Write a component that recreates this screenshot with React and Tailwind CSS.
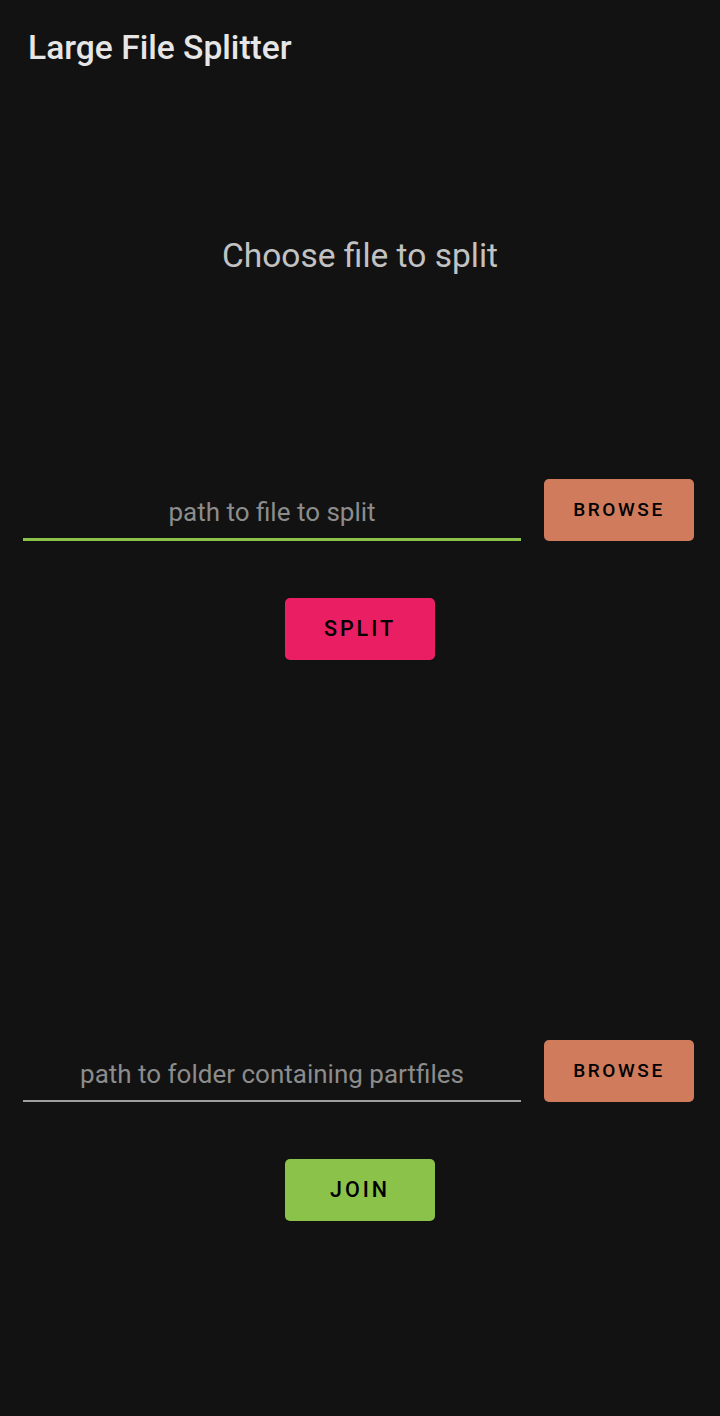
const FONT = { fontFamily: 'Roboto, "Liberation Sans", sans-serif' };

const Btn = ({ label, color, className = '' }) => (
  <button
    className={`h-[62px] w-[150px] rounded-[5px] ${color} text-black font-medium uppercase ${className}`}
  >
    {label}
  </button>
);

const PathRow = ({ placeholder, lineClass }) => (
  <div className="flex items-end pl-[23px] pr-[26px] gap-[23px]">
    <div className="flex-1 flex flex-col">
      <div className="h-[58px] flex items-center justify-center text-[26px] text-[#8c8c8c] leading-none pt-[6px]">
        {placeholder}
      </div>
      <div className={lineClass} />
    </div>
    <Btn label="Browse" color="bg-[#cf7b5c]" className="text-[19px] tracking-[2.6px]" />
  </div>
);

export default function App() {
  return (
    <div className="w-[720px] h-[1416px] bg-[#121212]" style={FONT}>
      <div className="h-[98px] pl-[28px] pt-[31px] text-[33.6px] font-medium text-[#e6e6e6] leading-none">
        Large File Splitter
      </div>

      <div className="h-[381px] pt-[141px] text-center text-[33.5px] text-[#c2c2c2] leading-none">
        Choose file to split
      </div>

      <PathRow placeholder="path to file to split" lineClass="h-[3px] bg-[#8bc34a]" />

      <div className="flex justify-center mt-[57px]">
        <Btn label="Split" color="bg-[#e91e63]" className="text-[21.5px] tracking-[3px]" />
      </div>

      <div className="mt-[380px]">
        <PathRow placeholder="path to folder containing partfiles" lineClass="h-[2px] bg-[#9e9e9e]" />
      </div>

      <div className="flex justify-center mt-[57px]">
        <Btn label="Join" color="bg-[#8bc34a]" className="text-[21.5px] tracking-[3px]" />
      </div>
    </div>
  );
}
